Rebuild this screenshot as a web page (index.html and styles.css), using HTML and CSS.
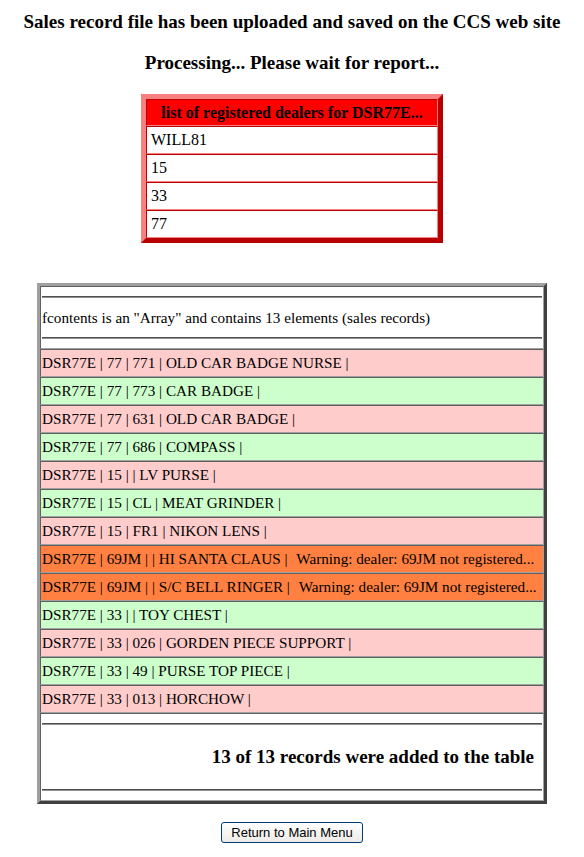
FILE: index.html
```html
<!DOCTYPE html>
<html>
  <head>
    <title>Upload Sales Records</title>
    <link rel="stylesheet" href="styles.css">
  </head>
<body>
<h3 class = 'title'>Sales record file has been uploaded and saved on the CCS web site</h3>
<h3 class = 'title'>Processing... Please wait for report...</h3>

<table class = 'dealers'>
  <tr><th>list of registered dealers for DSR77E...</th></tr>
  <tr><td>WILL81</td></tr>
  <tr><td>15</td></tr>
  <tr><td>33</td></tr>
  <tr><td>77</td></tr>
</table>

<table class = 'records'>
  <tr>
    <td class = 'info'>
      <hr>
      <div class = 'count'>fcontents is an "Array" and contains 13 elements (sales records)</div>
      <hr>
    </td>
  </tr>
  <tr><td class = 'odd'>DSR77E | 77 | 771 | OLD CAR BADGE NURSE |</td></tr>
  <tr><td class = 'even'>DSR77E | 77 | 773 | CAR BADGE |</td></tr>
  <tr><td class = 'odd'>DSR77E | 77 | 631 | OLD CAR BADGE |</td></tr>
  <tr><td class = 'even'>DSR77E | 77 | 686 | COMPASS |</td></tr>
  <tr><td class = 'odd'>DSR77E | 15 | | LV PURSE |</td></tr>
  <tr><td class = 'even'>DSR77E | 15 | CL | MEAT GRINDER |</td></tr>
  <tr><td class = 'odd'>DSR77E | 15 | FR1 | NIKON LENS |</td></tr>
  <tr><td class = 'warn'>DSR77E | 69JM | | HI SANTA CLAUS | <span class = 'msg'>Warning: dealer: 69JM not registered...</span></td></tr>
  <tr><td class = 'warn'>DSR77E | 69JM | | S/C BELL RINGER | <span class = 'msg'>Warning: dealer: 69JM not registered...</span></td></tr>
  <tr><td class = 'even'>DSR77E | 33 | | TOY CHEST |</td></tr>
  <tr><td class = 'odd'>DSR77E | 33 | 026 | GORDEN PIECE SUPPORT |</td></tr>
  <tr><td class = 'even'>DSR77E | 33 | 49 | PURSE TOP PIECE |</td></tr>
  <tr><td class = 'odd'>DSR77E | 33 | 013 | HORCHOW |</td></tr>
  <tr>
    <td class = 'info'>
      <hr>
      <h3 class = 'total'>13 of 13 records were added to the table</h3>
      <hr>
    </td>
  </tr>
</table>

<div class = 'menu'>
  <button onclick = 'history.back()'>Return to Main Menu</button>
</div>
</body>
</html>
```

FILE: styles.css
```css
body {
  margin: 8px;
  font-family: "Liberation Serif", "Times New Roman", serif;
  font-size: 16px;
  color: #000;
  background: #fff;
}

.title {
  font-size: 19px;
  line-height: 22px;
  margin: 3px 0 19px 0;
  text-align: center;
}

/* dealer list */
.dealers {
  margin: 20px auto 0 auto;
  width: 302px;
  border-collapse: separate;
  border-spacing: 0;
  border: 5px solid;
  border-color: #f88080 #b80000 #b80000 #f88080;
}

.dealers th {
  background-color: #ff0000;
  font-size: 16px;
  height: 23px;
  padding: 1px 0;
  border: 1px solid;
  border-color: #b80000 #f88080 #f88080 #b80000;
}

.dealers td {
  background-color: #fff;
  height: 24px;
  padding: 1px 4px;
  border: 1px solid;
  border-color: #b80000 #f88080 #f88080 #b80000;
}

/* sales records */
.records {
  margin: 40px auto 0 auto;
  width: 510px;
  border-collapse: separate;
  border-spacing: 0;
  border: 3px solid;
  border-color: #a0a0a0 #404040 #404040 #a0a0a0;
  font-size: 15.2px;
}

.records td {
  height: 24px;
  padding: 1px 1px;
  border: 1px solid;
  border-color: #606060 #a0a0a0 #a0a0a0 #606060;
  white-space: nowrap;
}

.records hr {
  margin: 8px 0;
  border: 0;
  border-top: 1px solid #505050;
  border-bottom: 1px solid #909090;
}

.count {
  line-height: 20px;
  padding: 2px 0 1px 0;
}

.records .info {
  background-color: #fff;
}

.odd {
  background-color: #ffcccc;
}

.even {
  background-color: #ccffcc;
}

.warn {
  background-color: #ff8040;
}

.msg {
  margin-left: 5px;
}

.total {
  font-size: 19px;
  line-height: 22px;
  text-align: right;
  margin: 21px 8px 21px 0;
}

.menu {
  text-align: center;
  margin-top: 18px;
}

.menu button {
  font-family: "Liberation Sans", Tahoma, sans-serif;
  font-size: 13px;
  width: 142px;
  height: 21px;
  padding: 0;
  background: linear-gradient(#ffffff, #ecebe6);
  border: 1px solid #003c74;
  border-radius: 3px;
  color: #000;
}
```
